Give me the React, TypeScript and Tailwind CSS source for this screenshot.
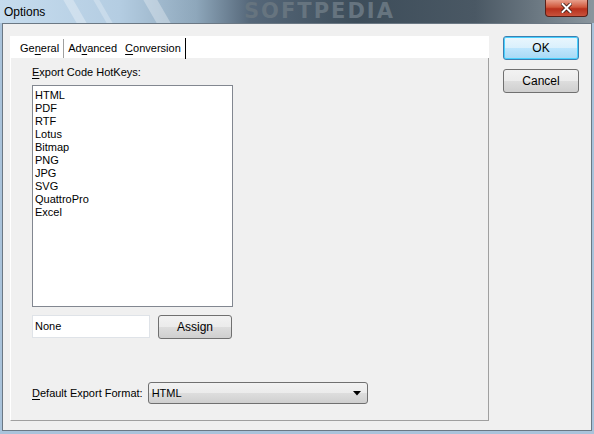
import React from 'react';

const formats = ['HTML', 'PDF', 'RTF', 'Lotus', 'Bitmap', 'PNG', 'JPG', 'SVG', 'QuattroPro', 'Excel'];

const ui = { fontFamily: '"Liberation Sans", Arial, sans-serif' };

function TitleBar() {
  return (
    <div className="relative h-[23px] overflow-hidden bg-[linear-gradient(90deg,#c6dcee_0%,#b4cde2_20%,#8ea7bb_33%,#56687a_42%,#3d4d5a_60%,#4a5864_80%,#8a969e_100%)]">
      {/* streaks from the aero glass */}
      <div className="absolute left-[70px] top-0 h-[23px] w-[10px] skew-x-[30deg] bg-white/30" />
      <div className="absolute left-[100px] top-0 h-[23px] w-[6px] skew-x-[30deg] bg-white/25" />
      <div className="absolute left-[150px] top-0 h-[23px] w-[14px] skew-x-[30deg] bg-white/30" />
      <div
        className="absolute left-[244px] top-0 text-[21px] font-bold leading-[22px] tracking-[2px] text-[#66747f]"
        style={{ fontFamily: '"DejaVu Sans", sans-serif' }}
      >
        SOFTPEDIA
      </div>
      <span className="absolute left-[4px] top-[3px] text-[12px] text-black" style={ui}>
        Options
      </span>
      <div className="absolute left-[545px] top-0 flex h-[17px] w-[43px] items-center justify-center rounded-b-[4px] border border-t-0 border-[#5a2018] bg-[linear-gradient(180deg,#e8a08c_0%,#d0573c_45%,#b8301c_55%,#c9533c_100%)]">
        <svg width="11" height="10" viewBox="0 0 11 10">
          <path d="M1.5 1 L9.5 9 M9.5 1 L1.5 9" stroke="#3b1810" strokeWidth="3.6" strokeLinecap="square" />
          <path d="M1.5 1 L9.5 9 M9.5 1 L1.5 9" stroke="#ffffff" strokeWidth="2" strokeLinecap="square" />
        </svg>
      </div>
    </div>
  );
}

function Tab({ pre, key1, post }: { pre: string; key1: string; post: string }) {
  return (
    <span className="px-[4px]">
      {pre}
      <span className="underline underline-offset-2">{key1}</span>
      {post}
    </span>
  );
}

function ListBox() {
  return (
    <div className="h-[222px] w-[201px] border border-[#828790] bg-white pl-[2px] pt-[3px] text-[11px] leading-[13px] text-black">
      {formats.map((f) => (
        <div key={f}>{f}</div>
      ))}
    </div>
  );
}

export default function App() {
  return (
    <div className="flex h-[434px] w-[594px] flex-col bg-[#a9c3db]" style={ui}>
      <TitleBar />
      <div className="mx-[2px] mb-[3px] flex flex-1 gap-[14px] border border-[#6b7884] bg-[#f0f0f0] pl-[7px] pt-[12px]">
        {/* tab control */}
        <div className="flex h-[385px] w-[479px] flex-col">
          <div className="flex h-[22px] items-center bg-white pl-[6px] pt-[3px] text-[11px] text-black">
            <Tab pre="Ge" key1="n" post="eral" />
            <span className="h-[19px] w-px bg-[#a0a0a0]" />
            <Tab pre="Ad" key1="v" post="anced" />
            <Tab pre="" key1="C" post="onversion" />
            <span className="h-[21px] w-px bg-black" />
          </div>
          <div className="flex flex-1 flex-col border-b border-l border-r border-b-[#a0a0a0] border-l-white border-r-[#a0a0a0] pl-[21px] pt-[7px] text-[11px] text-black">
            <div className="mb-[6px] leading-[14px]">
              <span className="underline underline-offset-2">E</span>xport Code HotKeys:
            </div>
            <ListBox />
            <div className="mt-[8px] flex gap-[8px]">
              <div className="flex h-[23px] w-[118px] items-center border border-[#dfe3e8] bg-white pl-[2px]">
                None
              </div>
              <button className="h-[24px] w-[74px] rounded-[3px] border border-[#707070] bg-[linear-gradient(180deg,#f2f2f2_0%,#ebebeb_50%,#dddddd_51%,#cfcfcf_100%)] text-[12px] text-black">
                Assign
              </button>
            </div>
            <div className="mt-[43px] flex items-center">
              <span className="mr-[5px] text-[11px]">
                <span className="underline underline-offset-2">D</span>efault Export Format:
              </span>
              <div className="flex h-[22px] w-[220px] items-center justify-between rounded-[3px] border border-[#707070] bg-[linear-gradient(180deg,#f2f2f2_0%,#ebebeb_50%,#dddddd_51%,#cfcfcf_100%)] pl-[3px] pr-[6px] text-[11px]">
                <span>HTML</span>
                <svg width="8" height="5" viewBox="0 0 8 5">
                  <path d="M0 0 H8 L4 4.5 Z" fill="#000" />
                </svg>
              </div>
            </div>
          </div>
        </div>
        {/* buttons */}
        <div className="flex flex-col gap-[9px]">
          <button className="h-[24px] w-[76px] rounded-[3px] border border-[#3c7fb1] bg-[linear-gradient(180deg,#eaf6fd_0%,#d9f0fc_50%,#bee6fd_51%,#a7d9f5_100%)] text-[12px] text-black shadow-[inset_0_0_0_1px_#48d1ff]">
            OK
          </button>
          <button className="h-[24px] w-[76px] rounded-[3px] border border-[#707070] bg-[linear-gradient(180deg,#f2f2f2_0%,#ebebeb_50%,#dddddd_51%,#cfcfcf_100%)] text-[12px] text-black">
            Cancel
          </button>
        </div>
      </div>
    </div>
  );
}
